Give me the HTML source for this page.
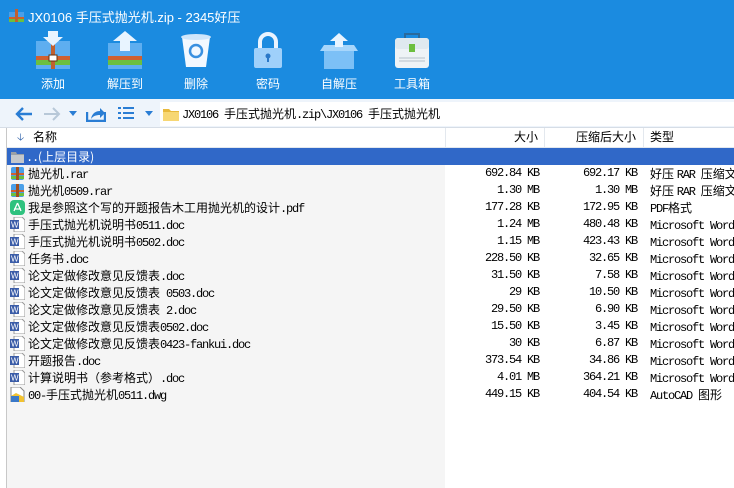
<!DOCTYPE html>
<html><head><meta charset="utf-8"><style>
*{margin:0;padding:0;box-sizing:border-box}
body{width:734px;height:488px;overflow:hidden;background:#fff;font-family:"Liberation Sans","Noto Sans CJK SC",sans-serif;position:relative}
#top{position:absolute;left:0;top:0;width:734px;height:99px;background:#1b8be0}
#title{position:absolute;left:28px;top:7px;color:#fff;font-size:13px}
.tb{position:absolute;top:31px;width:60px;text-align:center;color:#fff;font-size:12px}
.tb svg{display:block;margin:0 auto 6px}
#nav{position:absolute;left:0;top:99px;width:734px;height:29px;background:#eef4fb;border-bottom:1px solid #d6dde6}
#addr{position:absolute;left:160px;top:102px;width:574px;height:24px;background:#fff;font-family:"Noto Sans CJK SC",sans-serif;font-size:12px;line-height:24px;padding-left:22px;white-space:nowrap}
i{font-style:normal;font-family:"Liberation Mono",monospace;font-size:12px;letter-spacing:-1.2px}
#hdr{position:absolute;left:7px;top:128px;width:727px;height:20px;background:#fff;border-bottom:1px solid #e3e8ee;font-size:12px;line-height:19px}
#lb{position:absolute;left:6px;top:128px;width:1px;height:360px;background:#c8c8c8}
#namebg{position:absolute;left:7px;top:148px;width:438px;height:340px;background:#f5f5f5}
.row{position:absolute;left:7px;width:727px;height:17px;font-family:"Noto Sans CJK SC",sans-serif;font-size:12px;line-height:17px;white-space:nowrap}
.row span{position:absolute;height:17px;top:0}
.n{left:21px}.s{right:195px}.c{right:97px}.t{left:643px}
.s,.c{font-family:"Liberation Mono",monospace;font-size:12px;letter-spacing:-1.2px}
.ic{position:absolute;left:3px;top:1px;width:15px;height:15px}
.sel{background:#3068c8;color:#fff}
</style></head><body>
<div id="top">
<svg style="position:absolute;left:9px;top:9px" width="15" height="13"><rect x="0" y="3" width="15" height="10" fill="#4a9fe8"/><rect x="0" y="8" width="15" height="2" fill="#d0602a"/><rect x="0" y="10" width="15" height="3" fill="#6cbf3f"/><rect x="6" y="0" width="3" height="13" fill="#c06030"/></svg>
<div id="title">JX0106 手压式抛光机.zip - 2345好压</div>
<div class="tb" style="left:23px"><svg width="38" height="38"><path d="M2 10h34v28H2z" fill="#5eaef0"/><rect x="2" y="25" width="34" height="4" fill="#d06030"/><rect x="2" y="29" width="34" height="5" fill="#6cbf3f"/><rect x="17" y="10" width="4" height="28" fill="#c06030"/><rect x="15" y="24" width="8" height="6" fill="#fff" stroke="#603010"/><path d="M14 0h10v6h5l-10 9-10-9h5z" fill="#e8f4ff"/></svg>添加</div>
<div class="tb" style="left:95px"><svg width="38" height="38"><path d="M2 12h34v26H2z" fill="#5eaef0"/><rect x="2" y="25" width="34" height="4" fill="#d06030"/><rect x="2" y="29" width="34" height="5" fill="#6cbf3f"/><path d="M19 0l12 10h-7v10h-10v-10h-7z" fill="#e8f4ff"/></svg>解压到</div>
<div class="tb" style="left:166px"><svg width="38" height="38"><path d="M5 6h28l-4 30H9z" fill="#f2f8ff"/><ellipse cx="19" cy="6" rx="15" ry="3" fill="#cfe6fb"/><circle cx="19" cy="20" r="6" fill="none" stroke="#3a90e0" stroke-width="2.5"/></svg>删除</div>
<div class="tb" style="left:238px"><svg width="38" height="38"><path d="M11 18v-7a8 8 0 0 1 16 0v7" fill="none" stroke="#eaf4ff" stroke-width="4"/><rect x="5" y="17" width="28" height="20" rx="2" fill="#9fd0fa"/><circle cx="19" cy="25" r="2.5" fill="#2a78c8"/><rect x="18" y="26" width="2" height="5" fill="#2a78c8"/></svg>密码</div>
<div class="tb" style="left:309px"><svg width="38" height="38"><path d="M4 14h30v24H4z" fill="#7cc0f6"/><path d="M0 20l4-6h30l4 6z" fill="#a7d6fb"/><path d="M19 2l9 8h-5v6h-8v-6h-5z" fill="#e8f4ff"/></svg>自解压</div>
<div class="tb" style="left:382px"><svg width="38" height="38"><path d="M12 7V3h14v4" fill="none" stroke="#2b6a9c" stroke-width="2"/><rect x="2" y="7" width="34" height="30" rx="3" fill="#eef3f6"/><rect x="2" y="7" width="34" height="11" rx="3" fill="#dfe9ef"/><rect x="16" y="13" width="6" height="8" fill="#6cbf3f"/><path d="M6 27h26M6 30h26" stroke="#b5c2cb"/></svg>工具箱</div>
</div>
<div id="nav">
<svg style="position:absolute;left:14px;top:7px" width="20" height="16"><path d="M18 8H3M9 2L3 8l6 6" fill="none" stroke="#2a7dd4" stroke-width="2.4"/></svg>
<svg style="position:absolute;left:42px;top:7px" width="20" height="16"><path d="M2 8h15M11 2l6 6-6 6" fill="none" stroke="#b8c8d8" stroke-width="2"/></svg>
<svg style="position:absolute;left:69px;top:12px" width="8" height="5"><path d="M0 0h8L4 5z" fill="#2a7dd4"/></svg>
<svg style="position:absolute;left:86px;top:5px" width="20" height="18"><path d="M1 8v9h18V8" fill="none" stroke="#2a7dd4" stroke-width="2.4"/><path d="M5 15c1-6 5-8 9-8V4l5 5-5 5v-3c-4 0-7 1-9 4z" fill="#2a7dd4"/></svg>
<svg style="position:absolute;left:118px;top:8px" width="16" height="12"><path d="M0 1h3M5 1h11M0 6h3M5 6h11M0 11h3M5 11h11" stroke="#2a7dd4" stroke-width="2"/></svg>
<svg style="position:absolute;left:145px;top:12px" width="8" height="5"><path d="M0 0h8L4 5z" fill="#2a7dd4"/></svg>
</div>
<div id="addr"><svg style="position:absolute;left:3px;top:5px" width="16" height="14"><path d="M0 2h6l2 2h8v10H0z" fill="#e8b93c"/><path d="M0 5h16v9H0z" fill="#f7d774"/></svg><i>JX0106 </i>手压式抛光机<i>.zip\JX0106 </i>手压式抛光机</div>
<div id="hdr"><span style="position:absolute;left:10px;font-size:10px;color:#2a5ea8">🡣</span><span style="position:absolute;left:26px">名称</span><span style="position:absolute;left:507px">大小</span><span style="position:absolute;left:569px">压缩后大小</span><span style="position:absolute;left:643px">类型</span>
<div style="position:absolute;left:438px;top:0;width:1px;height:19px;background:#e3e8ee"></div><div style="position:absolute;left:537px;top:0;width:1px;height:19px;background:#e3e8ee"></div><div style="position:absolute;left:636px;top:0;width:1px;height:19px;background:#e3e8ee"></div></div>
<div id="lb"></div>
<div id="namebg"></div>
<div class="row sel" style="top:148px"><svg class="ic" viewBox="0 0 15 15"><path d="M1 3h5l1 2h7v9H1z" fill="#9aa0a6"/><path d="M1 6h13v8H1z" fill="#c4c8cc"/></svg><span class="n" style="left:19px;width:420px;background:#3068c8"><i>..</i>(上层目录)</span></div>
<div class="row" style="top:165px"><svg class="ic" viewBox="0 0 15 15"><rect x="1" y="1" width="13" height="13" rx="2" fill="#4a9fe8"/><rect x="1" y="7" width="13" height="2" fill="#d06030"/><rect x="1" y="10" width="13" height="3" fill="#6cbf3f"/><rect x="6" y="1" width="3" height="13" fill="#a05020"/></svg><span class="n">抛光机<i>.rar</i></span><span class="s">692.84 KB</span><span class="c">692.17 KB</span><span class="t">好压 <i>RAR </i>压缩文件</span></div>
<div class="row" style="top:182px"><svg class="ic" viewBox="0 0 15 15"><rect x="1" y="1" width="13" height="13" rx="2" fill="#4a9fe8"/><rect x="1" y="7" width="13" height="2" fill="#d06030"/><rect x="1" y="10" width="13" height="3" fill="#6cbf3f"/><rect x="6" y="1" width="3" height="13" fill="#a05020"/></svg><span class="n">抛光机<i>0509.rar</i></span><span class="s">1.30 MB</span><span class="c">1.30 MB</span><span class="t">好压 <i>RAR </i>压缩文件</span></div>
<div class="row" style="top:199px"><svg class="ic" viewBox="0 0 15 15"><rect x="0" y="0" width="15" height="15" rx="4" fill="#2ec27e"/><path d="M7.5 3L4 11M7.5 3l3.5 8M4 9h7" stroke="#fff" stroke-width="1.3" fill="none"/></svg><span class="n">我是参照这个写的开题报告木工用抛光机的设计<i>.pdf</i></span><span class="s">177.28 KB</span><span class="c">172.95 KB</span><span class="t"><i>PDF</i>格式</span></div>
<div class="row" style="top:216px"><svg class="ic" viewBox="0 0 15 15"><path d="M4 0h8l3 3v12H4z" fill="#fff" stroke="#999"/><rect x="0" y="3" width="9" height="9" fill="#3a5ca8"/><text x="1" y="10.5" font-size="8" fill="#fff" font-family="Liberation Sans">W</text></svg><span class="n">手压式抛光机说明书<i>0511.doc</i></span><span class="s">1.24 MB</span><span class="c">480.48 KB</span><span class="t"><i>Microsoft Word</i></span></div>
<div class="row" style="top:233px"><svg class="ic" viewBox="0 0 15 15"><path d="M4 0h8l3 3v12H4z" fill="#fff" stroke="#999"/><rect x="0" y="3" width="9" height="9" fill="#3a5ca8"/><text x="1" y="10.5" font-size="8" fill="#fff" font-family="Liberation Sans">W</text></svg><span class="n">手压式抛光机说明书<i>0502.doc</i></span><span class="s">1.15 MB</span><span class="c">423.43 KB</span><span class="t"><i>Microsoft Word</i></span></div>
<div class="row" style="top:250px"><svg class="ic" viewBox="0 0 15 15"><path d="M4 0h8l3 3v12H4z" fill="#fff" stroke="#999"/><rect x="0" y="3" width="9" height="9" fill="#3a5ca8"/><text x="1" y="10.5" font-size="8" fill="#fff" font-family="Liberation Sans">W</text></svg><span class="n">任务书<i>.doc</i></span><span class="s">228.50 KB</span><span class="c">32.65 KB</span><span class="t"><i>Microsoft Word</i></span></div>
<div class="row" style="top:267px"><svg class="ic" viewBox="0 0 15 15"><path d="M4 0h8l3 3v12H4z" fill="#fff" stroke="#999"/><rect x="0" y="3" width="9" height="9" fill="#3a5ca8"/><text x="1" y="10.5" font-size="8" fill="#fff" font-family="Liberation Sans">W</text></svg><span class="n">论文定做修改意见反馈表<i>.doc</i></span><span class="s">31.50 KB</span><span class="c">7.58 KB</span><span class="t"><i>Microsoft Word</i></span></div>
<div class="row" style="top:284px"><svg class="ic" viewBox="0 0 15 15"><path d="M4 0h8l3 3v12H4z" fill="#fff" stroke="#999"/><rect x="0" y="3" width="9" height="9" fill="#3a5ca8"/><text x="1" y="10.5" font-size="8" fill="#fff" font-family="Liberation Sans">W</text></svg><span class="n">论文定做修改意见反馈表<i> 0503.doc</i></span><span class="s">29 KB</span><span class="c">10.50 KB</span><span class="t"><i>Microsoft Word</i></span></div>
<div class="row" style="top:301px"><svg class="ic" viewBox="0 0 15 15"><path d="M4 0h8l3 3v12H4z" fill="#fff" stroke="#999"/><rect x="0" y="3" width="9" height="9" fill="#3a5ca8"/><text x="1" y="10.5" font-size="8" fill="#fff" font-family="Liberation Sans">W</text></svg><span class="n">论文定做修改意见反馈表<i> 2.doc</i></span><span class="s">29.50 KB</span><span class="c">6.90 KB</span><span class="t"><i>Microsoft Word</i></span></div>
<div class="row" style="top:318px"><svg class="ic" viewBox="0 0 15 15"><path d="M4 0h8l3 3v12H4z" fill="#fff" stroke="#999"/><rect x="0" y="3" width="9" height="9" fill="#3a5ca8"/><text x="1" y="10.5" font-size="8" fill="#fff" font-family="Liberation Sans">W</text></svg><span class="n">论文定做修改意见反馈表<i>0502.doc</i></span><span class="s">15.50 KB</span><span class="c">3.45 KB</span><span class="t"><i>Microsoft Word</i></span></div>
<div class="row" style="top:335px"><svg class="ic" viewBox="0 0 15 15"><path d="M4 0h8l3 3v12H4z" fill="#fff" stroke="#999"/><rect x="0" y="3" width="9" height="9" fill="#3a5ca8"/><text x="1" y="10.5" font-size="8" fill="#fff" font-family="Liberation Sans">W</text></svg><span class="n">论文定做修改意见反馈表<i>0423-fankui.doc</i></span><span class="s">30 KB</span><span class="c">6.87 KB</span><span class="t"><i>Microsoft Word</i></span></div>
<div class="row" style="top:352px"><svg class="ic" viewBox="0 0 15 15"><path d="M4 0h8l3 3v12H4z" fill="#fff" stroke="#999"/><rect x="0" y="3" width="9" height="9" fill="#3a5ca8"/><text x="1" y="10.5" font-size="8" fill="#fff" font-family="Liberation Sans">W</text></svg><span class="n">开题报告<i>.doc</i></span><span class="s">373.54 KB</span><span class="c">34.86 KB</span><span class="t"><i>Microsoft Word</i></span></div>
<div class="row" style="top:369px"><svg class="ic" viewBox="0 0 15 15"><path d="M4 0h8l3 3v12H4z" fill="#fff" stroke="#999"/><rect x="0" y="3" width="9" height="9" fill="#3a5ca8"/><text x="1" y="10.5" font-size="8" fill="#fff" font-family="Liberation Sans">W</text></svg><span class="n">计算说明书（参考格式）<i>.doc</i></span><span class="s">4.01 MB</span><span class="c">364.21 KB</span><span class="t"><i>Microsoft Word</i></span></div>
<div class="row" style="top:386px"><svg class="ic" viewBox="0 0 15 15"><path d="M1 0h9l4 4v11H1z" fill="#fff" stroke="#888"/><path d="M1 9l5-3 8 4v5H1z" fill="#f2c230"/><path d="M1 9h8v6H1z" fill="#3a78c8"/></svg><span class="n"><i>00-</i>手压式抛光机<i>0511.dwg</i></span><span class="s">449.15 KB</span><span class="c">404.54 KB</span><span class="t"><i>AutoCAD </i>图形</span></div>
</body></html>
